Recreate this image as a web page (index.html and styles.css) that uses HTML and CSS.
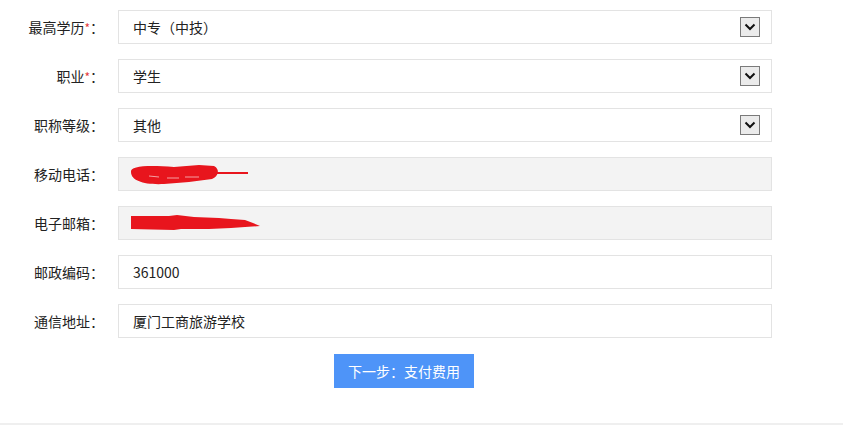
FILE: index.html
```html
<!DOCTYPE html>
<html lang="zh-CN">
<head>
<meta charset="utf-8">
<title>报名信息</title>
<link rel="stylesheet" href="styles.css">
</head>
<body>
<div class="page">
  <form class="form">
    <div class="row">
      <label class="label">最高学历<span class="req">*</span>：</label>
      <div class="field select"><span class="value">中专（中技）</span><span class="arrow"><svg width="12" height="8" viewBox="0 0 12 8"><path d="M1.5 1.5 L6 6 L10.5 1.5" fill="none" stroke="#111" stroke-width="2"/></svg></span></div>
    </div>
    <div class="row">
      <label class="label">职业<span class="req">*</span>：</label>
      <div class="field select"><span class="value">学生</span><span class="arrow"><svg width="12" height="8" viewBox="0 0 12 8"><path d="M1.5 1.5 L6 6 L10.5 1.5" fill="none" stroke="#111" stroke-width="2"/></svg></span></div>
    </div>
    <div class="row">
      <label class="label">职称等级：</label>
      <div class="field select"><span class="value">其他</span><span class="arrow"><svg width="12" height="8" viewBox="0 0 12 8"><path d="M1.5 1.5 L6 6 L10.5 1.5" fill="none" stroke="#111" stroke-width="2"/></svg></span></div>
    </div>
    <div class="row">
      <label class="label">移动电话：</label>
      <div class="field readonly">
        <svg class="scribble" width="160" height="34" viewBox="0 0 160 34"><path d="M12 15 C11 9 28 8 55 10 L80 8 L95 9 C101 12 100 19 93 22 L70 25 L45 27 C26 28 12 24 12 15 Z" fill="#e8151d"/><path d="M92 16 L129 16" stroke="#e8151d" stroke-width="2.2"/><path d="M30 19 L40 20 M48 21 L60 21 M66 20 L80 20" stroke="#f5a0a3" stroke-width="1"/></svg>
      </div>
    </div>
    <div class="row">
      <label class="label">电子邮箱：</label>
      <div class="field readonly">
        <svg class="scribble" width="160" height="34" viewBox="0 0 160 34"><path d="M12 10 L50 10 L58 9 L75 11 L100 12 L112 13 L126 14 L134 17 L141 20 L126 21 L112 22 L90 23 L62 23 L55 24 L12 23 Z" fill="#e8151d"/></svg>
      </div>
    </div>
    <div class="row">
      <label class="label">邮政编码：</label>
      <div class="field"><span class="value">361000</span></div>
    </div>
    <div class="row">
      <label class="label">通信地址：</label>
      <div class="field"><span class="value">厦门工商旅游学校</span></div>
    </div>
    <div class="actions">
      <button type="button" class="btn">下一步：支付费用</button>
    </div>
  </form>
  <div class="footer-line"></div>
</div>
</body>
</html>
```
FILE: styles.css
```css
* { box-sizing: border-box; }
html, body { margin: 0; padding: 0; background: #fff; }
body {
  font-family: "Microsoft YaHei", "Noto Sans CJK SC", "Liberation Sans", sans-serif;
  font-size: 14px;
  color: #333;
}
.page { width: 843px; height: 443px; padding-top: 10px; }
.form { display: flex; flex-direction: column; gap: 15px; }
.row { display: flex; align-items: center; gap: 14px; height: 34px; }
.label {
  width: 104px;
  text-align: right;
  white-space: nowrap;
  color: #222;
  line-height: 20px;
}
.req { color: #e4393c; font-size: 12px; }
.field {
  position: relative;
  width: 654px;
  height: 34px;
  border: 1px solid #e3e3e3;
  background: #fff;
  display: flex;
  align-items: center;
  padding: 0 11px 0 14px;
}
.field.readonly { background: #f3f3f3; }
.value { flex: 1; color: #222; line-height: 20px; }
.arrow {
  width: 20px;
  height: 20px;
  border: 1px solid #7a7a7a;
  background: #ebebeb;
  display: flex;
  align-items: center;
  justify-content: center;
}
.scribble { position: absolute; left: 0; top: -1px; }
.actions { display: flex; padding-left: 334px; margin-top: 1px; }
.btn {
  width: 140px;
  height: 34px;
  border: none;
  background: #4e94f8;
  color: #fff;
  font-family: inherit;
  font-size: 14px;
  padding: 0;
  cursor: pointer;
}
.footer-line { margin-top: 35px; height: 2px; background: #efefef; }
```
